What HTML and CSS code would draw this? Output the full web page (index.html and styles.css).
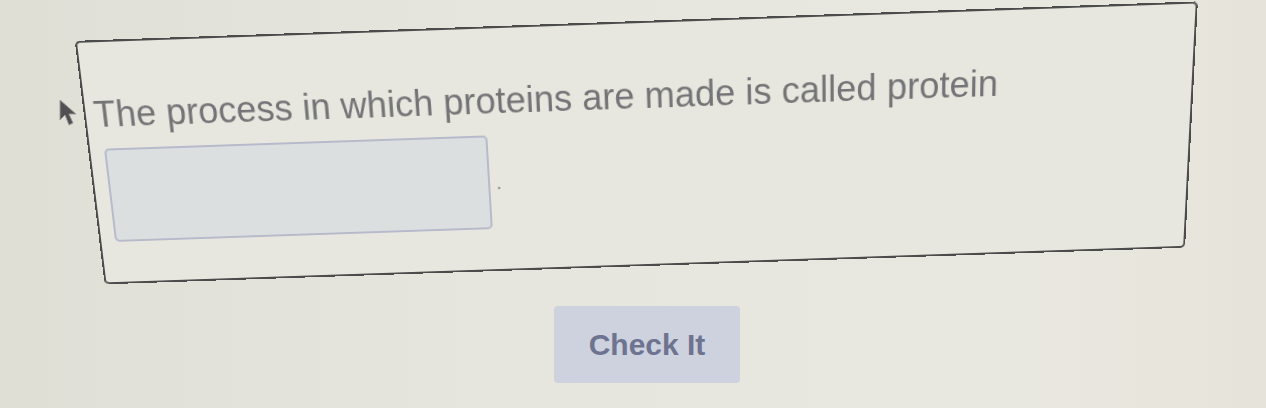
FILE: index.html
```html
<html>
    <link rel="stylesheet" href="styles.css">
<head>
    <meta charset="UTF-8">
    <meta name="viewport" content="width=device-width, initial-scale=1.0">
</head>
<body>
    <div class="page">
        <div class="question">
            <p class="prompt">The process in which proteins are made is called protein</p>
            <div class="answer-row">
                <input class="answer" type="text">
                <span class="period">.</span>
            </div>
        </div>
        <div class="actions">
            <button class="check">Check It</button>
        </div>
    </div>
    <svg class="cursor" width="26" height="30" viewBox="0 0 26 30">
        <path d="M2 2 L2 22 L7 17 L11 27 L15 25 L11 16 L18 16 Z" fill="#505052" stroke="#9a9a9a" stroke-width="1"/>
    </svg>
</body>
</html>
```

FILE: styles.css
```css
body {
    margin: 0;
    width: 1266px;
    height: 408px;
    overflow: hidden;
    background: linear-gradient(90deg, #dfdfd6 0%, #e6e6de 40%, #e9e8e0 80%, #e6e4da 100%);
    font-family: "Liberation Sans", Arial, sans-serif;
    position: relative;
}

.page {
    padding: 22px 0 0 88px;
}

.question {
    width: 1102px;
    height: 248px;
    box-sizing: border-box;
    border: 2px solid #4c4c4c;
    border-radius: 5px;
    background: #e7e7df;
    padding: 50px 10px 0 8px;
    transform: perspective(1000px) rotateX(-9deg) rotate(-2deg);
}

.prompt {
    margin: 0;
    font-size: 36px;
    line-height: 44px;
    color: #747477;
}

.answer-row {
    display: flex;
    align-items: center;
    margin-top: 12px;
}

.answer {
    width: 384px;
    height: 96px;
    box-sizing: border-box;
    margin-left: 6px;
    background: #dcdfe0;
    border: 2px solid #b6bacb;
    border-radius: 5px;
}

.period {
    color: #888;
    font-size: 20px;
    margin-left: 6px;
}

.actions {
    display: flex;
    justify-content: center;
    padding: 36px 0 0 0;
    margin-left: -60px;
}

.check {
    width: 186px;
    height: 77px;
    border: none;
    border-radius: 4px;
    background: #ced1de;
    color: #6e7390;
    font-family: "Liberation Sans", Arial, sans-serif;
    font-weight: bold;
    font-size: 30px;
}

.cursor {
    position: absolute;
    left: 58px;
    top: 98px;
}
```
